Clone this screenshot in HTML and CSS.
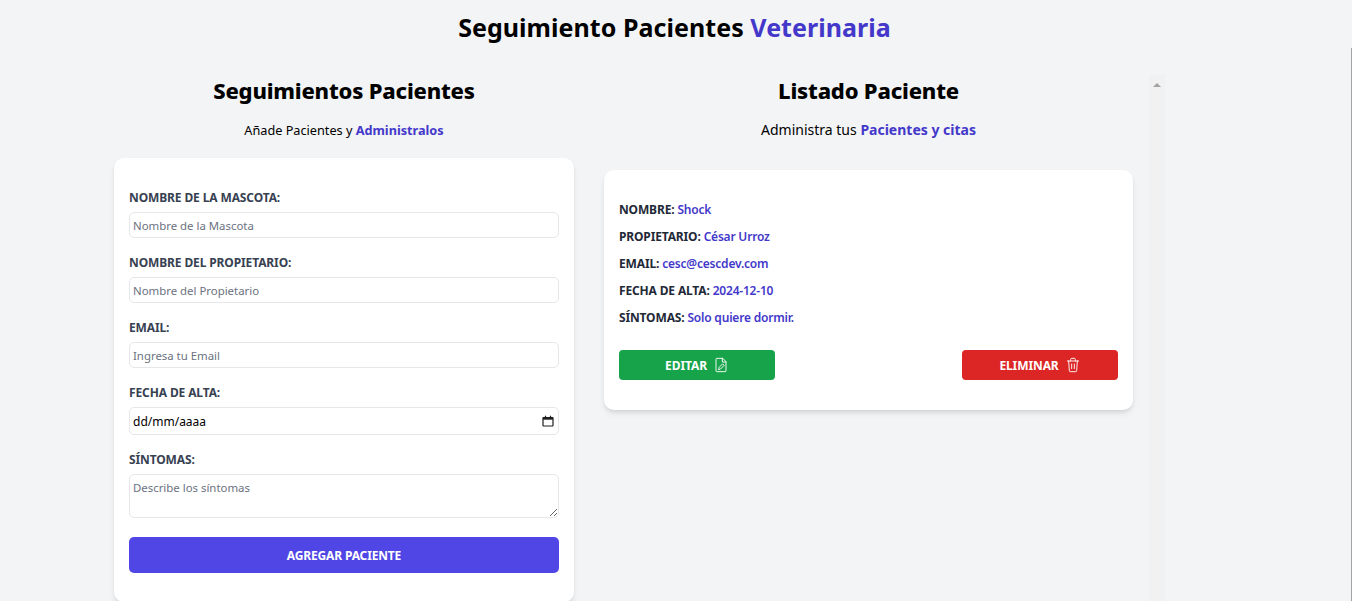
FILE: index.html
```html
<!DOCTYPE html>
<html lang="es">
<head>
    <meta charset="UTF-8">
    <meta name="viewport" content="width=device-width, initial-scale=1.0">
    <title>Seguimiento Pacientes Veterinaria</title>
    <link rel="stylesheet" href="styles.css">
</head>
<body>
    <header class="header">
        <h1>Seguimiento Pacientes <span class="accent">Veterinaria</span></h1>
    </header>
    <main class="columns">
        <section class="form-col">
            <h2>Seguimientos Pacientes</h2>
            <p class="lead lead-small">Añade Pacientes y <span class="link">Administralos</span></p>
            <form class="card form-card">
                <div class="field">
                    <label for="mascota">Nombre de la Mascota:</label>
                    <input type="text" id="mascota" placeholder="Nombre de la Mascota">
                </div>
                <div class="field">
                    <label for="propietario">Nombre del Propietario:</label>
                    <input type="text" id="propietario" placeholder="Nombre del Propietario">
                </div>
                <div class="field">
                    <label for="email">Email:</label>
                    <input type="email" id="email" placeholder="Ingresa tu Email">
                </div>
                <div class="field">
                    <label>Fecha de Alta:</label>
                    <div class="date-input">
                        <span>dd/mm/aaaa</span>
                        <svg viewBox="0 0 12 12" fill="none" stroke="#1f1f1f">
                            <path d="M1.5 2.5h9a.5.5 0 0 1 .5.5v7.5a.5.5 0 0 1-.5.5h-9a.5.5 0 0 1-.5-.5V3a.5.5 0 0 1 .5-.5z" stroke-width="1.2"/>
                            <path d="M1 3.7h10" stroke-width="2"/>
                            <path d="M3.5 .8v2M8.5 .8v2" stroke-width="1.2"/>
                        </svg>
                    </div>
                </div>
                <div class="field">
                    <label for="sintomas">Síntomas:</label>
                    <textarea id="sintomas" placeholder="Describe los síntomas"></textarea>
                </div>
                <button type="button" class="submit">Agregar Paciente</button>
            </form>
        </section>
        <section class="list-col">
            <div class="list-body">
                <h2>Listado Paciente</h2>
                <p class="lead">Administra tus <span class="link">Pacientes y citas</span></p>
                <div class="card patient">
                    <p>Nombre: <span>Shock</span></p>
                    <p>Propietario: <span>César Urroz</span></p>
                    <p>Email: <span>cesc@cescdev.com</span></p>
                    <p>Fecha de Alta: <span>2024-12-10</span></p>
                    <p>Síntomas: <span>Solo quiere dormir.</span></p>
                    <div class="actions">
                        <button type="button" class="btn btn-edit">Editar
                            <svg viewBox="0 0 24 24" fill="none" stroke="currentColor" stroke-width="1.4" stroke-linecap="round" stroke-linejoin="round">
                                <path d="M14 2H6a1.5 1.5 0 0 0-1.5 1.5v17A1.5 1.5 0 0 0 6 22h12a1.5 1.5 0 0 0 1.5-1.5V7.5z"/>
                                <path d="M14 2v5.5h5.5"/>
                                <path d="M8.5 18.5l.7-3 5.3-5.3 2.3 2.3-5.3 5.3z"/>
                            </svg>
                        </button>
                        <button type="button" class="btn btn-delete">Eliminar
                            <svg viewBox="0 0 24 24" fill="none" stroke="currentColor" stroke-width="1.4" stroke-linecap="round" stroke-linejoin="round">
                                <path d="M3.5 6h17"/>
                                <path d="M8.5 6V3.5A1.5 1.5 0 0 1 10 2h4a1.5 1.5 0 0 1 1.5 1.5V6"/>
                                <path d="M5.5 6l1 14.5A1.5 1.5 0 0 0 8 22h8a1.5 1.5 0 0 0 1.5-1.5l1-14.5"/>
                                <path d="M10 10.5v7"/>
                                <path d="M14 10.5v7"/>
                            </svg>
                        </button>
                    </div>
                </div>
            </div>
            <div class="scroll-track"><span class="scroll-arrow"></span></div>
        </section>
        <div class="page-scroll"></div>
    </main>
</body>
</html>
```

FILE: styles.css
```css
* {
    box-sizing: border-box;
}
html, body {
    height: 100%;
}
body {
    font-family: "Noto Sans", "Open Sans", sans-serif;
    background-color: #f3f4f6;
    color: #000;
    margin: 0;
    overflow: hidden;
}
h1, h2, p {
    margin: 0;
}
.header {
    height: 48px;
    padding-top: 9px;
    text-align: center;
}
.header h1 {
    font-size: 25px;
    line-height: 36px;
    font-weight: 700;
    letter-spacing: 0.05px;
    padding-right: 3px;
}
.accent {
    color: #4338ca;
}
.columns {
    display: flex;
    height: 553px;
    padding-left: 114px;
}
.form-col {
    width: 460px;
    flex-shrink: 0;
    margin-right: 30px;
}
.form-col h2, .list-body h2 {
    font-size: 22px;
    line-height: 32px;
    font-weight: 800;
    letter-spacing: -0.2px;
    text-align: center;
    margin-top: 26px;
}
.lead {
    font-size: 14px;
    line-height: 20px;
    text-align: center;
    margin-top: 14px;
}
.lead-small {
    font-size: 12.7px;
}
.link {
    color: #4338ca;
    font-weight: 700;
}
.card {
    background-color: #fff;
    border-radius: 10px;
    box-shadow: 0 4px 6px -1px rgba(0, 0, 0, 0.1), 0 2px 4px -2px rgba(0, 0, 0, 0.1);
}
.form-card {
    margin-top: 18px;
    padding: 31px 15px 28px;
    height: 444px;
}
.field {
    margin-bottom: 16px;
}
.field label {
    display: block;
    font-size: 12px;
    line-height: 18px;
    font-weight: 700;
    letter-spacing: -0.12px;
    color: #374151;
    text-transform: uppercase;
    margin-bottom: 5px;
}
.field input, .field textarea {
    display: block;
    width: 100%;
    height: 26px;
    padding: 4px 3px;
    font-family: inherit;
    font-size: 11.4px;
    color: #000;
    background: #fff;
    border: 1px solid #e5e7eb;
    border-radius: 5px;
    outline: none;
}
.field input::placeholder, .field textarea::placeholder {
    color: #6b7280;
    opacity: 1;
}
.date-input {
    display: flex;
    align-items: center;
    justify-content: space-between;
    height: 28px;
    padding: 0 4px 0 3px;
    font-size: 12px;
    background: #fff;
    border: 1px solid #e5e7eb;
    border-radius: 5px;
}
.date-input svg {
    width: 12px;
    height: 12px;
}
.field textarea {
    height: 44px;
    padding-top: 5px;
    resize: vertical;
}
.submit {
    display: block;
    width: 100%;
    height: 36px;
    margin-top: 19px;
    font-family: inherit;
    font-size: 12px;
    font-weight: 700;
    letter-spacing: -0.15px;
    color: #fff;
    text-transform: uppercase;
    background-color: #4f46e5;
    border: none;
    border-radius: 5px;
}
.list-col {
    display: flex;
    width: 561px;
    flex-shrink: 0;
    height: 100%;
}
.list-body {
    width: 529px;
    margin-right: 16px;
}
.patient {
    margin-top: 30px;
    padding: 31px 15px 30px;
    height: 240px;
}
.patient p {
    font-size: 12px;
    line-height: 18px;
    font-weight: 700;
    letter-spacing: -0.15px;
    color: #1f2937;
    margin-bottom: 9px;
    text-transform: uppercase;
}
.patient span {
    color: #4338ca;
    font-weight: 600;
    letter-spacing: -0.2px;
    text-transform: none;
}
.actions {
    display: flex;
    justify-content: space-between;
    margin-top: 23px;
}
.btn {
    display: flex;
    align-items: center;
    justify-content: center;
    gap: 6px;
    width: 156px;
    height: 30px;
    font-family: inherit;
    font-size: 12px;
    font-weight: 700;
    letter-spacing: -0.1px;
    color: #fff;
    text-transform: uppercase;
    border: none;
    border-radius: 4px;
}
.btn svg {
    width: 16px;
    height: 16px;
}
.btn-edit {
    background-color: #16a34a;
}
.btn-delete {
    background-color: #dc2626;
}
.scroll-track {
    width: 16px;
    height: 100%;
    margin-top: 27px;
    background-color: #f1f1f1;
    display: flex;
    justify-content: center;
    padding-top: 8px;
    flex-shrink: 0;
}
.scroll-arrow {
    width: 0;
    height: 0;
    border-left: 4px solid transparent;
    border-right: 4px solid transparent;
    border-bottom: 4px solid #a3a3a3;
}
.page-scroll {
    margin-left: auto;
    width: 1px;
    background-color: #a3a3a3;
}
```
